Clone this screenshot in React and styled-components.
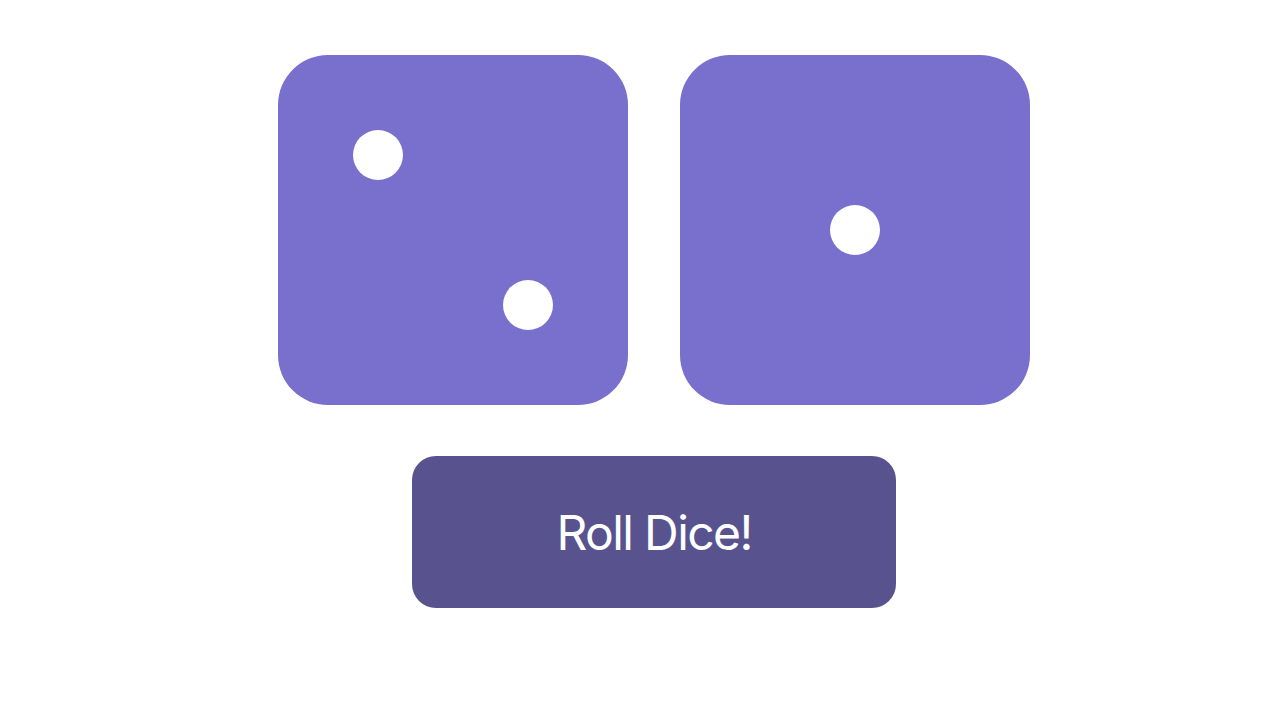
import React from "react";
import styled, { createGlobalStyle } from "styled-components";

const Global = createGlobalStyle`
  html, body { margin: 0; padding: 0; background: #ffffff; }
  body { font-family: Inter, "Noto Sans", sans-serif; }
`;

const Page = styled.main`
  display: flex;
  flex-direction: column;
  align-items: center;
  padding: 55px 0 0 22px;
  gap: 51px;
`;

const DiceRow = styled.div`
  display: flex;
  gap: 52px;
`;

const Die = styled.div`
  position: relative;
  width: 350px;
  height: 350px;
  border-radius: 50px;
  background: #7870cc;
`;

const Pip = styled.span`
  position: absolute;
  width: 50px;
  height: 50px;
  border-radius: 50%;
  background: #ffffff;
  left: ${(p) => p.$x - 25}px;
  top: ${(p) => p.$y - 25}px;
`;

const RollButton = styled.button`
  width: 484px;
  height: 152px;
  border: none;
  border-radius: 24px;
  background: #58538f;
  color: #ffffff;
  font-family: Inter, "Noto Sans", sans-serif;
  font-size: 48px;
  font-weight: 400;
  letter-spacing: -1.6px;
  padding: 0;
  cursor: pointer;
`;

const faces = {
  1: [[175, 175]],
  2: [[100, 100], [250, 250]],
};

export default function App() {
  return (
    <>
      <Global />
      <Page>
        <DiceRow>
          {[2, 1].map((v, i) => (
            <Die key={i}>
              {faces[v].map(([x, y], j) => (
                <Pip key={j} $x={x} $y={y} />
              ))}
            </Die>
          ))}
        </DiceRow>
        <RollButton>Roll Dice!</RollButton>
      </Page>
    </>
  );
}
